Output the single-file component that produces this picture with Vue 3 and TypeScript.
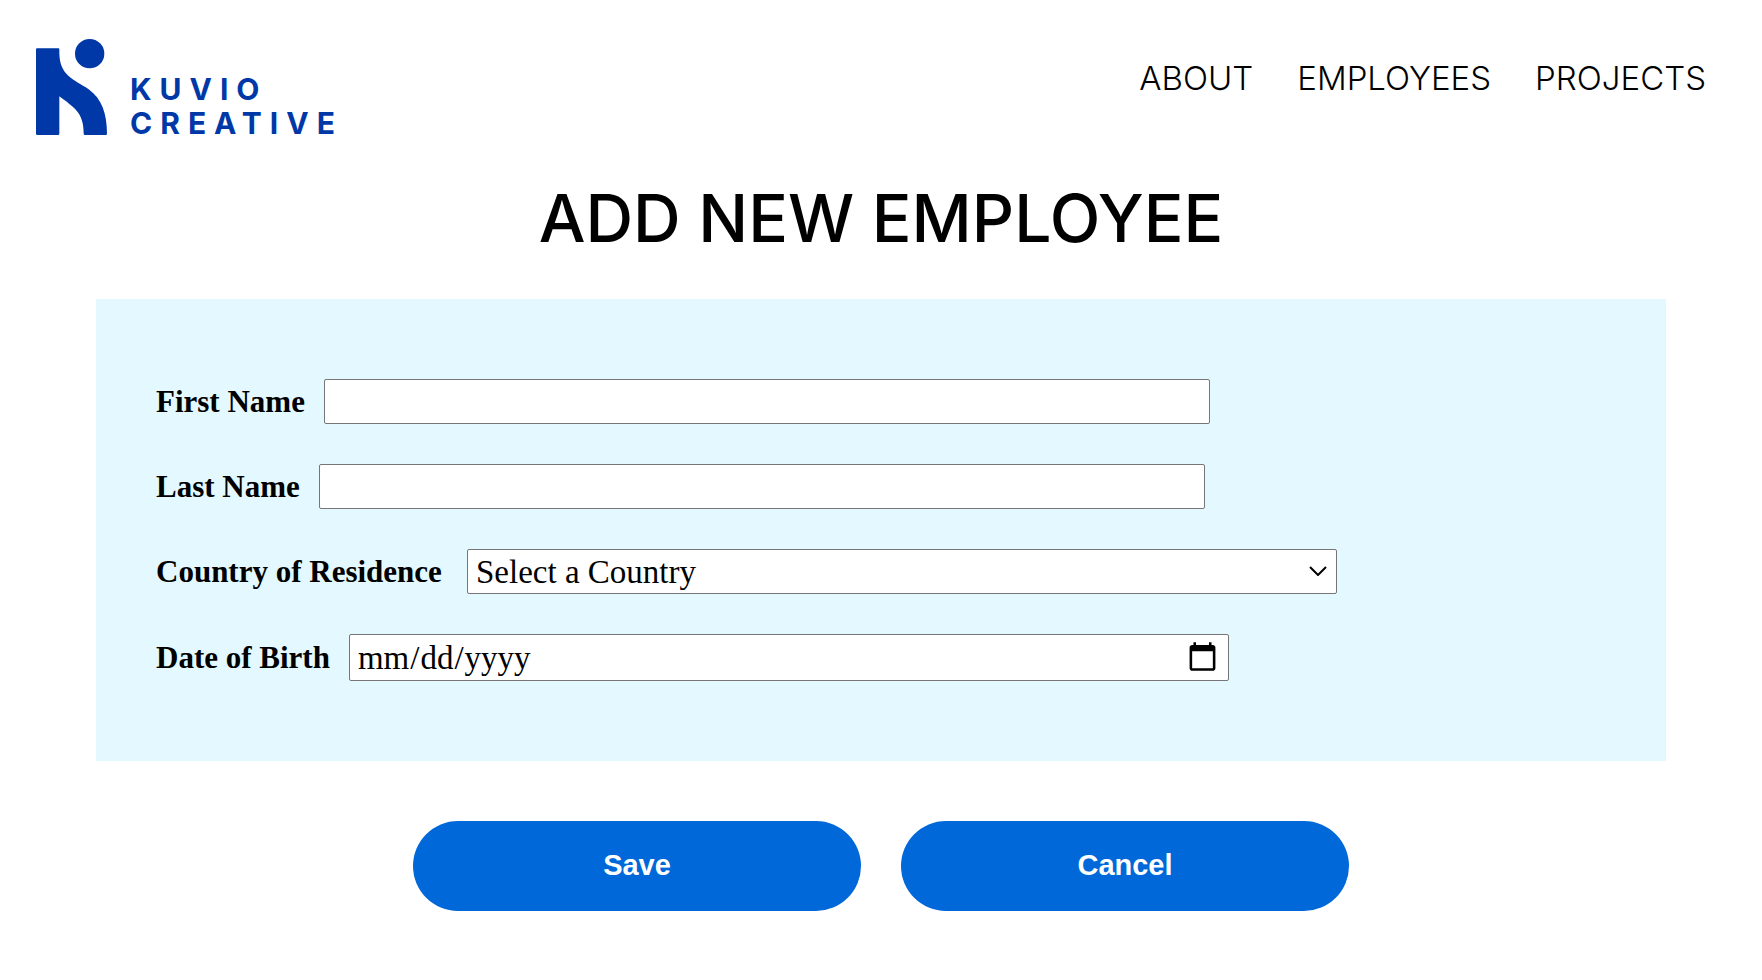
<script setup lang="ts">
import { ref } from 'vue'

interface NavLink {
  label: string
  href: string
}

const links: NavLink[] = [
  { label: 'ABOUT', href: '#about' },
  { label: 'EMPLOYEES', href: '#employees' },
  { label: 'PROJECTS', href: '#projects' },
]

const firstName = ref('')
const lastName = ref('')
const country = ref('')
const birthDate = ref('')

function reset(): void {
  firstName.value = ''
  lastName.value = ''
  country.value = ''
  birthDate.value = ''
}
</script>

<template>
  <div class="page">
    <header class="header">
      <a class="logo" href="#">
        <svg class="logo-mark" viewBox="48 57 213 288" aria-hidden="true">
          <circle cx="209" cy="101" r="44" />
          <path
            d="M51 85H115Q118 85 118 88V100C119 165 158 177 205 207C246 236 261 282 261 341Q261 345 257 345H195Q191 345 191 341C192 278 160 261 118 229V341Q118 345 114 345H52Q48 345 48 341V88Q48 85 51 85Z"
          />
        </svg>
        <span class="logo-text">
          <span>KUVIO</span>
          <span>CREATIVE</span>
        </span>
      </a>
      <nav class="nav">
        <a v-for="link in links" :key="link.label" :href="link.href">{{ link.label }}</a>
      </nav>
    </header>

    <main>
      <h1>ADD NEW EMPLOYEE</h1>
      <form @submit.prevent>
        <div class="panel">
          <div class="row">
            <label for="first-name">First Name</label>
            <input id="first-name" v-model="firstName" class="text-field" type="text" />
          </div>
          <div class="row">
            <label for="last-name">Last Name</label>
            <input id="last-name" v-model="lastName" class="text-field" type="text" />
          </div>
          <div class="row">
            <label class="long-label" for="country">Country of Residence</label>
            <div class="select-box">
              <select id="country" v-model="country">
                <option value="">Select a Country</option>
              </select>
              <svg class="chevron" viewBox="0 0 18 10" aria-hidden="true">
                <path d="M1 1L9 9L17 1" />
              </svg>
            </div>
          </div>
          <div class="row">
            <label for="birth-date">Date of Birth</label>
            <input id="birth-date" v-model="birthDate" class="date-field" type="date" />
          </div>
        </div>
        <div class="actions">
          <button type="submit">Save</button>
          <button type="button" @click="reset">Cancel</button>
        </div>
      </form>
    </main>
  </div>
</template>

<style>
body {
  margin: 0;
  background: #fff;
}
</style>

<style scoped>
.page {
  padding: 39px 36px;
  color: #000;
}

.header {
  display: flex;
  justify-content: space-between;
  align-items: flex-start;
}

.logo {
  display: flex;
  align-items: flex-end;
  gap: 23px;
  color: #0038a8;
  text-decoration: none;
}

.logo-mark {
  width: 71px;
  height: 96px;
  fill: currentColor;
}

.logo-text {
  display: flex;
  flex-direction: column;
  height: 63px;
  font: 700 30px/34px Inter, sans-serif;
  letter-spacing: 8px;
}

.nav {
  display: flex;
  gap: 44px;
  padding: 20px 20px 0 0;
  font: 300 33px/38px Inter, sans-serif;
}

.nav a {
  color: inherit;
  text-decoration: none;
}

h1 {
  margin: 43px 0 41px;
  text-align: center;
  font: 500 66px/80px Inter, sans-serif;
}

.panel {
  display: flex;
  flex-direction: column;
  gap: 40px;
  margin: 0 60px;
  padding: 80px 60px;
  background: #e3f8ff;
}

.row {
  display: flex;
  align-items: center;
  gap: 19px;
  font: 33px/38px "Liberation Serif", serif;
}

label {
  font-size: 31px;
  font-weight: 700;
}

.long-label {
  min-width: 292px;
}

input,
select {
  box-sizing: border-box;
  border: 1px solid #767676;
  border-radius: 2px;
  background-color: #fff;
  color: #000;
  font: inherit;
}

.text-field {
  width: calc(60% + 16px);
  height: 45px;
  padding: 2px 7px;
}

.select-box {
  position: relative;
  display: flex;
  width: 60%;
}

select {
  appearance: none;
  width: 100%;
  height: 45px;
  padding: 0 36px 0 8px;
}

.chevron {
  position: absolute;
  top: 17px;
  right: 10px;
  width: 18px;
  height: 10px;
  fill: none;
  stroke: #000;
  stroke-width: 2;
  pointer-events: none;
}

.date-field {
  width: calc(60% + 10px);
  height: 47px;
  padding: 1px 7px;
}

.actions {
  display: flex;
  justify-content: center;
  gap: 40px;
  margin-top: 60px;
}

button {
  width: 448px;
  height: 90px;
  padding: 0 0 2px;
  border: 0;
  border-radius: 45px;
  background: #0068d9;
  color: #fff;
  font: 700 29px/34px "Liberation Sans", sans-serif;
}
</style>
